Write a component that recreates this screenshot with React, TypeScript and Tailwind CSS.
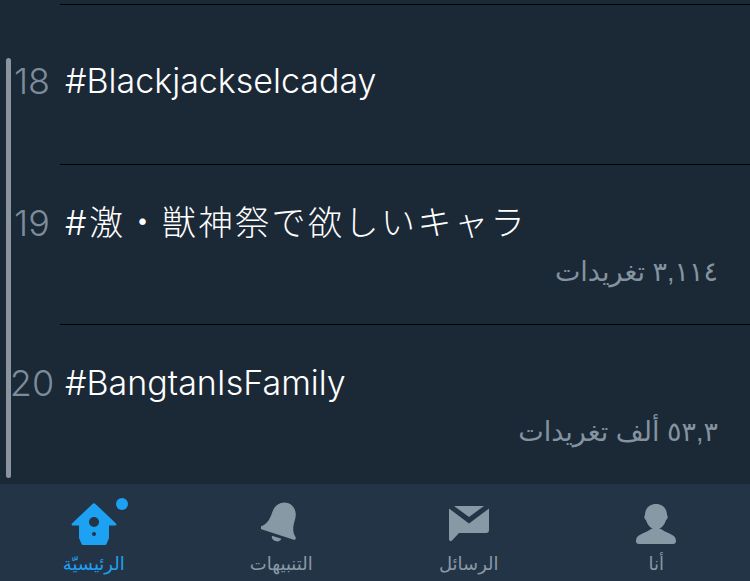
const trends = [
  { rank: "18", name: "#Blackjackselcaday", num: "", word: "", cjk: false },
  { rank: "19", name: "#激・獣神祭で欲しいキャラ", num: "٣,١١٤", word: "تغريدات", cjk: true },
  { rank: "20", name: "#BangtanIsFamily", num: "٥٣,٣", word: "ألف تغريدات", cjk: false },
];

function HomeIcon() {
  return (
    <svg width="46" height="44" viewBox="0 0 46 44" fill="none">
      <path
        d="M21.5 2 a2 2 0 0 1 3 0 L45 21.5 c.8 1 .3 2 -1 2 H38 V36 L35.5 42 a1.5 1.5 0 0 1 -1.5 1 H12 a1.5 1.5 0 0 1 -1.5 -1 L8 36 V23.5 H2 c-1.3 0 -1.8 -1 -1 -2 Z"
        fill="#1da1f2"
      />
      <circle cx="23" cy="20" r="5" fill="#243447" />
      <circle cx="23" cy="32" r="2" fill="#243447" />
    </svg>
  );
}

function BellIcon() {
  return (
    <svg width="40" height="46" viewBox="0 0 40 46" fill="none">
      <g transform="rotate(18 20 23)" fill="#8899a6">
        <path d="M20 1 C13 1 8 7 8 15 C8 23 6 28 2 31 C1 32 1.5 34 3 34 H37 C38.500 34 39 32 38 31 C34 28 32 23 32 15 C32 7 27 1 20 1 Z" />
        <path d="M15 37 a5 4 0 0 0 10 0 Z" />
      </g>
    </svg>
  );
}

function MailIcon() {
  return (
    <svg width="40" height="36" viewBox="0 0 40 36" fill="none">
      <path d="M5 0 H35 L20 11 Z" fill="#8899a6" />
      <path d="M0 2.5 V33 c0 2 2 3 3 1.500 L10 27 H37 q3 0 3 -3 V2.500 L20 17.500 Z" fill="#8899a6" />
    </svg>
  );
}

function PersonIcon() {
  return (
    <svg width="40" height="40" viewBox="0 0 40 40" fill="none">
      <path
        d="M20 0 C13 0 9 5 9 11 C8 12 8 15 10 16 C11 20 14 24 20 27 C26 24 29 20 30 16 C32 15 32 12 31 11 C31 5 27 0 20 0 Z"
        fill="#8899a6"
      />
      <path d="M3 40 H37 q3 0 3 -3 c0 -6 -6 -7 -12 -10 L25 25 h-10 l-3 2 C6 30 0 31 0 37 q0 3 3 3 Z" fill="#8899a6" />
    </svg>
  );
}

const tabs = [
  { label: "الرئيسيّة", icon: <HomeIcon />, active: true },
  { label: "التنبيهات", icon: <BellIcon />, active: false },
  { label: "الرسائل", icon: <MailIcon />, active: false },
  { label: "أنا", icon: <PersonIcon />, active: false },
];

export default function App() {
  return (
    <div className="flex h-[581px] w-[750px] flex-col overflow-hidden bg-[#1b2836] font-['Inter','Noto_Sans_CJK_JP',sans-serif]">
      <div className="relative flex-1">
        {/* scroll indicator */}
        <div className="absolute left-[6px] top-[58px] h-[420px] w-[5px] rounded-full bg-[#8b95a0]" />
        <div className="h-[4px]" />
        {trends.map((t) => (
          <div key={t.rank}>
            <div className="ml-[60px] h-px bg-black" />
            <div className={t.num ? "flex h-[159px] flex-col justify-center" : "flex h-[159px] flex-col justify-center pb-[8px]"}>
              <div className="flex items-center">
                <span className="w-[60px] pl-[4px] text-center text-[36px] font-light leading-[40px] text-[#7c8c9a]">
                  {t.rank}
                </span>
                <span
                  className={
                    t.cjk
                      ? "pl-[5px] text-[34px] font-light leading-[40px] tracking-[2.5px] text-white"
                      : "pl-[5px] text-[34px] font-light leading-[40px] text-white"
                  }
                >
                  {t.name}
                </span>
              </div>
              {t.num && (
                <div
                  dir="rtl"
                  className="pr-[32px] pt-[14px] font-['Liberation_Sans','DejaVu_Sans',sans-serif] text-[27px] leading-[30px] text-[#8393a0]"
                >
                  <span className="tracking-[3.5px]">{t.num}</span> {t.word}
                </div>
              )}
            </div>
          </div>
        ))}
      </div>
      <nav className="grid h-[97px] grid-cols-4 bg-[#243447]">
        {tabs.map((tab) => (
          <div key={tab.label} className="flex flex-col items-center">
            <div className="relative mt-[17px] flex h-[46px] w-[46px] items-center justify-center">
              {tab.icon}
              {tab.active && <span className="absolute left-[45px] top-[-3px] h-[12px] w-[12px] rounded-full bg-[#1da1f2]" />}
            </div>
            <span
              className={
                tab.active
                  ? "mt-[5px] font-['Liberation_Sans','DejaVu_Sans',sans-serif] text-[18px] leading-[24px] text-[#1da1f2]"
                  : "mt-[5px] font-['Liberation_Sans','DejaVu_Sans',sans-serif] text-[18px] leading-[24px] text-[#8899a6]"
              }
            >
              {tab.label}
            </span>
          </div>
        ))}
      </nav>
    </div>
  );
}
